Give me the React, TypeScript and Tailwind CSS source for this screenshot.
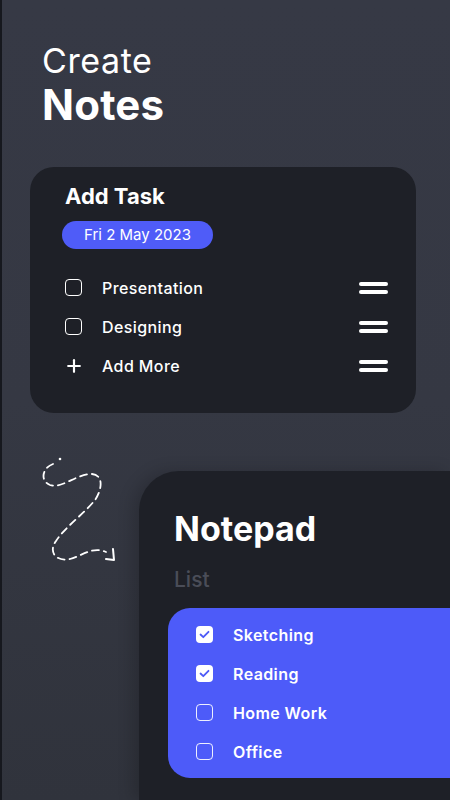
import { Plus } from 'lucide-react'

const font = { fontFamily: 'Inter, "Noto Sans", sans-serif' }

function Box({ checked = false, tone = 'dark' }: { checked?: boolean; tone?: 'dark' | 'blue' }) {
  if (checked) {
    return (
      <div className="w-[17px] h-[17px] rounded-[4px] bg-white flex items-center justify-center">
        <svg width="11" height="9" viewBox="0 0 11 9" fill="none">
          <path d="M1.5 4.5l2.8 2.7L9.5 1.8" stroke="#4d5af7" strokeWidth="1.8" strokeLinecap="round" strokeLinejoin="round" />
        </svg>
      </div>
    )
  }
  return (
    <div
      className={`w-[17px] h-[17px] rounded-[4px] border-[1.5px] ${tone === 'blue' ? 'border-white/90' : 'border-white'}`}
    />
  )
}

function Handle() {
  return (
    <div className="flex flex-col gap-[4px]">
      <div className="w-[29px] h-[4px] rounded-full bg-white" />
      <div className="w-[29px] h-[4px] rounded-full bg-white" />
    </div>
  )
}

function TaskRow({ label, plus = false }: { label: string; plus?: boolean }) {
  return (
    <div className="flex items-center h-[39px]">
      <div className="w-[37px] flex items-center">
        {plus ? <Plus size={20} strokeWidth={2.6} className="text-white -ml-[1px]" /> : <Box />}
      </div>
      <span className="flex-1 text-[16px] font-medium text-white tracking-[0.4px]">{label}</span>
      <Handle />
    </div>
  )
}

// dashed doodle between the two cards, coords match the page
function Squiggle() {
  return (
    <svg width="109" height="125" viewBox="30 450 109 125" fill="none" className="shrink-0">
      <circle cx="60" cy="459" r="1.3" fill="white" />
      <path
        d="M53 464 C42 468 40 481 50 485 C62 489 76 474 92 474 C104 475 102 490 95 500 C84 514 66 526 56 541 C48 552 56 562 70 559 C82 556 92 546 106 552"
        stroke="white"
        strokeWidth="1.8"
        strokeLinecap="round"
        strokeDasharray="7 5"
      />
      <path d="M106 559 L114 560 L113 549" stroke="white" strokeWidth="2" strokeLinecap="round" strokeLinejoin="round" />
    </svg>
  )
}

export default function App() {
  const list = [
    { label: 'Sketching', done: true },
    { label: 'Reading', done: true },
    { label: 'Home Work', done: false },
    { label: 'Office', done: false },
  ]

  return (
    <div
      style={font}
      className="w-[450px] h-[800px] overflow-hidden border-l-2 border-[#16181e] bg-gradient-to-b from-[#363945] via-[#353843] to-[#30333c] flex flex-col"
    >
      <div className="pl-[40px] pt-[41px]">
        <div className="text-[34px] leading-[40px] text-white tracking-[0.6px]">Create</div>
        <div className="text-[42px] leading-[48px] font-bold text-white tracking-[0.2px]">Notes</div>
      </div>

      <div className="mt-[38px] ml-[28px] w-[386px] h-[246px] rounded-[24px] bg-[#1e2027] pt-[14px] pl-[35px] pr-[28px]">
        <div className="text-[22px] leading-[30px] font-bold text-white">Add Task</div>
        <div className="mt-[10px] -ml-[3px] w-[151px] h-[28px] rounded-full bg-[#4f5cf8] flex items-center justify-center text-[15px] text-white">
          Fri 2 May 2023
        </div>
        <div className="mt-[19px] flex flex-col">
          <TaskRow label="Presentation" />
          <TaskRow label="Designing" />
          <TaskRow label="Add More" plus />
        </div>
      </div>

      <div className="mt-[37px] ml-[28px] flex flex-1">
        <div className="w-[109px] shrink-0">
          <Squiggle />
        </div>
        <div className="flex-1 mt-[21px] rounded-tl-[40px] bg-[#1e2027] shadow-[-6px_0_16px_rgba(0,0,0,0.18)] pt-[38px]">
          <div className="pl-[35px] text-[34px] leading-[40px] font-bold text-white">Notepad</div>
          <div className="pl-[35px] mt-[18px] text-[21px] leading-[26px] font-medium text-[#4a4d58]">List</div>
          <div className="ml-[29px] mt-[15px] h-[170px] rounded-l-[22px] bg-[#4d5bf9] pt-[7px] pl-[28px] flex flex-col">
            {list.map((it) => (
              <div key={it.label} className="flex items-center h-[39px]">
                <div className="w-[37px]">
                  <Box checked={it.done} tone="blue" />
                </div>
                <span className="text-[16px] font-semibold text-white tracking-[0.4px]">{it.label}</span>
              </div>
            ))}
          </div>
        </div>
      </div>
    </div>
  )
}
